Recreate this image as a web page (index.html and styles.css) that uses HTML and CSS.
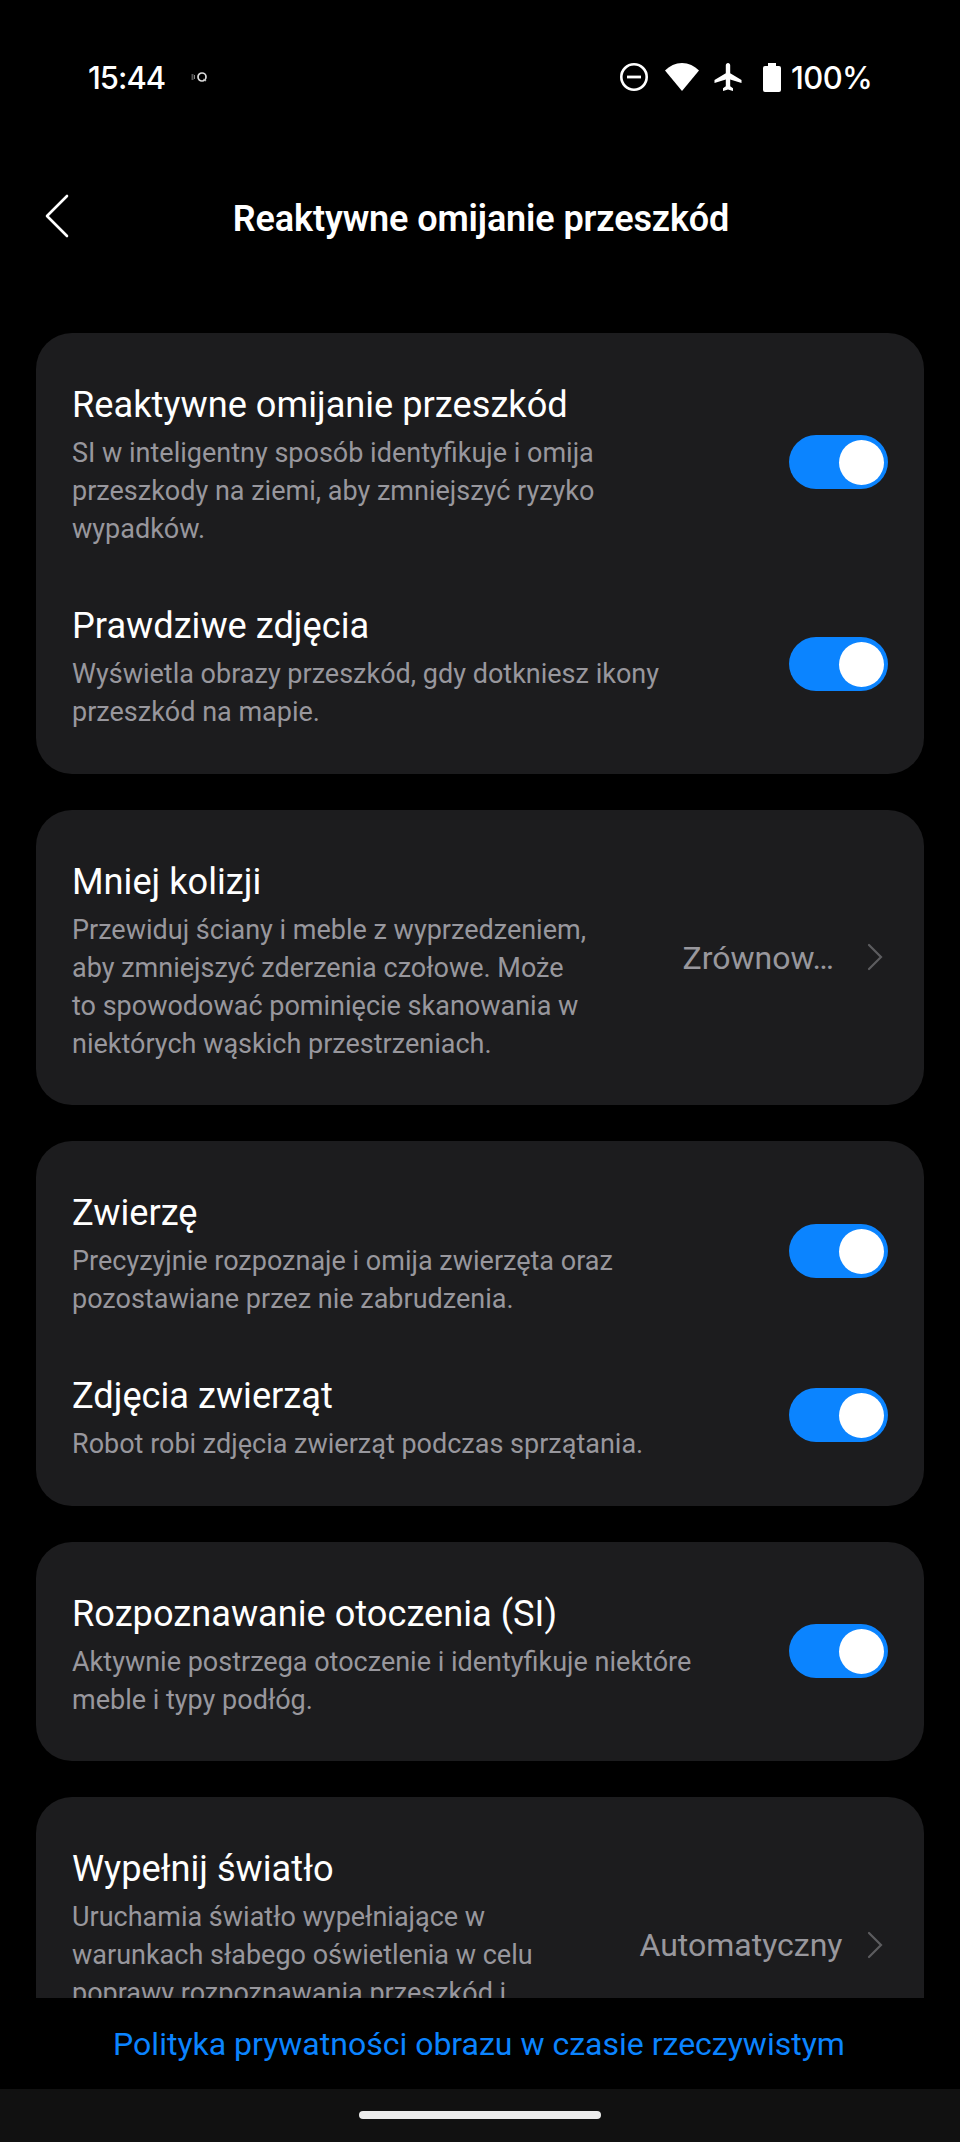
FILE: index.html
```html
<!DOCTYPE html>
<html lang="pl">
<head>
  <meta charset="UTF-8" />
  <meta name="viewport" content="width=device-width, initial-scale=1.0" />
  <title>Reaktywne omijanie przeszkód</title>
  <link rel="stylesheet" href="styles.css">
</head>
<body>
  <div class="screen">
    <div class="statusbar">
      <span class="clock">15:44</span>
      <svg class="notif" width="18" height="12" viewBox="0 0 18 12">
        <path d="M1.500 3v6" stroke="#555" stroke-width="2" />
        <path d="M3.500 4v4" stroke="#888" stroke-width="1" />
        <circle cx="11" cy="6" r="4" fill="none" stroke="#ddd" stroke-width="1.700" />
        <path d="M12.500 8l2.500 2" stroke="#bbb" stroke-width="1.300" />
      </svg>
      <div class="status-icons">
        <svg class="dnd" width="28" height="28" viewBox="0 0 28 28">
          <circle cx="14" cy="14" r="12.700" fill="none" stroke="#fff" stroke-width="2.600" />
          <path d="M7 14h14" stroke="#fff" stroke-width="2.800" />
        </svg>
        <svg class="wifi" width="34" height="28" viewBox="0 0 34 28">
          <path d="M17 28L0 7.500C4.500 3 10.500 0 17 0s12.500 3 17 7.500z" fill="#fff" />
        </svg>
        <svg class="plane" width="28" height="28" viewBox="0 0 28 28">
          <path d="M14 0c-1.300 0-2.200 1-2.200 2.300v7.900L.5 17v3l11.300-3.500v6.700L9 25.300V28l5-1.500 5 1.500v-2.700l-2.800-2.100v-6.700L27.500 20v-3l-11.300-6.800V2.300C16.200 1 15.300 0 14 0z" fill="#fff" />
        </svg>
        <svg class="battery" width="18" height="29" viewBox="0 0 18 29">
          <path d="M5 0h8v3h3a2 2 0 0 1 2 2v22a2 2 0 0 1-2 2H2a2 2 0 0 1-2-2V5a2 2 0 0 1 2-2h3z" fill="#fff" />
        </svg>
        <span class="percent">100%</span>
      </div>
    </div>

    <header>
      <svg class="back" width="24" height="44" viewBox="0 0 24 44">
        <path d="M22 2L2 22l20 20" fill="none" stroke="#fff" stroke-width="2.600" stroke-linecap="round" stroke-linejoin="round" />
      </svg>
      <h1>Reaktywne omijanie przeszkód</h1>
    </header>

    <main>
      <div class="card">
        <div class="row">
          <div class="text">
            <h2>Reaktywne omijanie przeszkód</h2>
            <p>SI w inteligentny sposób identyfikuje i omija<br>przeszkody na ziemi, aby zmniejszyć ryzyko<br>wypadków.</p>
          </div>
          <div class="switch"></div>
        </div>
        <div class="row">
          <div class="text">
            <h2>Prawdziwe zdjęcia</h2>
            <p>Wyświetla obrazy przeszkód, gdy dotkniesz ikony<br>przeszkód na mapie.</p>
          </div>
          <div class="switch"></div>
        </div>
      </div>

      <div class="card">
        <div class="row">
          <div class="text">
            <h2>Mniej kolizji</h2>
            <p>Przewiduj ściany i meble z wyprzedzeniem,<br>aby zmniejszyć zderzenia czołowe. Może<br>to spowodować pominięcie skanowania w<br>niektórych wąskich przestrzeniach.</p>
          </div>
          <div class="value short">
            <span>Zrównow…</span>
            <svg width="16" height="28" viewBox="0 0 16 28">
              <path d="M2 2l12 12L2 26" fill="none" stroke="#5c5c5f" stroke-width="2.200" stroke-linecap="round" />
            </svg>
          </div>
        </div>
      </div>

      <div class="card">
        <div class="row">
          <div class="text">
            <h2>Zwierzę</h2>
            <p>Precyzyjnie rozpoznaje i omija zwierzęta oraz<br>pozostawiane przez nie zabrudzenia.</p>
          </div>
          <div class="switch"></div>
        </div>
        <div class="row">
          <div class="text">
            <h2>Zdjęcia zwierząt</h2>
            <p>Robot robi zdjęcia zwierząt podczas sprzątania.</p>
          </div>
          <div class="switch"></div>
        </div>
      </div>

      <div class="card">
        <div class="row">
          <div class="text">
            <h2>Rozpoznawanie otoczenia (SI)</h2>
            <p>Aktywnie postrzega otoczenie i identyfikuje niektóre<br>meble i typy podłóg.</p>
          </div>
          <div class="switch"></div>
        </div>
      </div>

      <div class="card">
        <div class="row">
          <div class="text tall">
            <h2>Wypełnij światło</h2>
            <p>Uruchamia światło wypełniające w<br>warunkach słabego oświetlenia w celu<br>poprawy rozpoznawania przeszkód i</p>
          </div>
          <div class="value">
            <span>Automatyczny</span>
            <svg width="16" height="28" viewBox="0 0 16 28">
              <path d="M2 2l12 12L2 26" fill="none" stroke="#5c5c5f" stroke-width="2.200" stroke-linecap="round" />
            </svg>
          </div>
        </div>
      </div>
    </main>

    <a class="policy">Polityka prywatności obrazu w czasie rzeczywistym</a>
    <div class="navbar"><div class="handle"></div></div>
  </div>
</body>
</html>
```
FILE: styles.css
```css
:root {
  --bg: #000;
  --card: #1c1c1e;
  --muted: #98979d;
  --accent: #0b84ff;
}

* {
  box-sizing: border-box;
}

body {
  margin: 0;
  background: var(--bg);
  color: #fff;
  font-family: Roboto, sans-serif;
}

h1, h2, p {
  margin: 0;
  font-weight: 400;
  white-space: nowrap;
}

.screen {
  height: 2142px;
  display: flex;
  flex-direction: column;
  overflow: hidden;
}

.statusbar {
  height: 154px;
  flex: none;
  display: flex;
  align-items: center;
  padding: 0 89px 0 88px;
  font-family: Inter, sans-serif;
  font-weight: 500;
  font-size: 31px;
}

.clock {
  width: 77px;
  letter-spacing: -1px;
}

.notif {
  margin-left: 26px;
}

.status-icons {
  margin-left: auto;
  display: flex;
  align-items: center;
}

.wifi {
  margin-left: 17px;
}

.plane {
  margin-left: 15px;
}

.battery {
  margin-left: 21px;
}

.percent {
  width: 81px;
  margin-left: 10px;
  margin-right: -1px;
  letter-spacing: -0.6px;
}

header {
  height: 179px;
  flex: none;
  display: flex;
  align-items: flex-start;
  padding: 40px 45px 0;
}

h1 {
  flex: 1;
  margin: 4px 22px 0 0;
  text-align: center;
  font-size: 36px;
  line-height: 42px;
  font-weight: 600;
  letter-spacing: -0.12px;
}

main {
  height: 1665px;
  flex: none;
  display: flex;
  flex-direction: column;
  gap: 36px;
  padding: 0 36px;
  overflow: hidden;
}

.card {
  flex: none;
  display: flex;
  flex-direction: column;
  gap: 59.5px;
  padding: 48px 36px;
  border-radius: 36px;
  background: var(--card);
}

.row {
  display: flex;
  align-items: center;
  justify-content: space-between;
}

h2 {
  margin-bottom: 5px;
  font-size: 36.2px;
  line-height: 48px;
}

.text p {
  margin-bottom: -5.5px;
  font-size: 27px;
  line-height: 38px;
  color: var(--muted);
}

.tall {
  height: 199.5px;
}

.switch {
  width: 99px;
  height: 54px;
  padding: 5px 4px;
  border-radius: 27px;
  background: var(--accent);
}

.switch::after {
  content: "";
  display: block;
  width: 45px;
  height: 45px;
  margin-left: auto;
  border-radius: 50%;
  background: #fff;
}

.value {
  display: flex;
  align-items: center;
  gap: 24.5px;
  padding-right: 5px;
  font-size: 32px;
  line-height: 40px;
  color: var(--muted);
}

.value span {
  padding-top: 1px;
}

.value.short {
  gap: 33px;
}

.policy {
  height: 91px;
  flex: none;
  padding-right: 2px;
  text-align: center;
  font-size: 32px;
  line-height: 92px;
  color: var(--accent);
}

.navbar {
  height: 53px;
  flex: none;
  padding-top: 22px;
  background: #111;
}

.handle {
  width: 242px;
  height: 8px;
  margin: 0 auto;
  border-radius: 4px;
  background: #ececec;
}
```
